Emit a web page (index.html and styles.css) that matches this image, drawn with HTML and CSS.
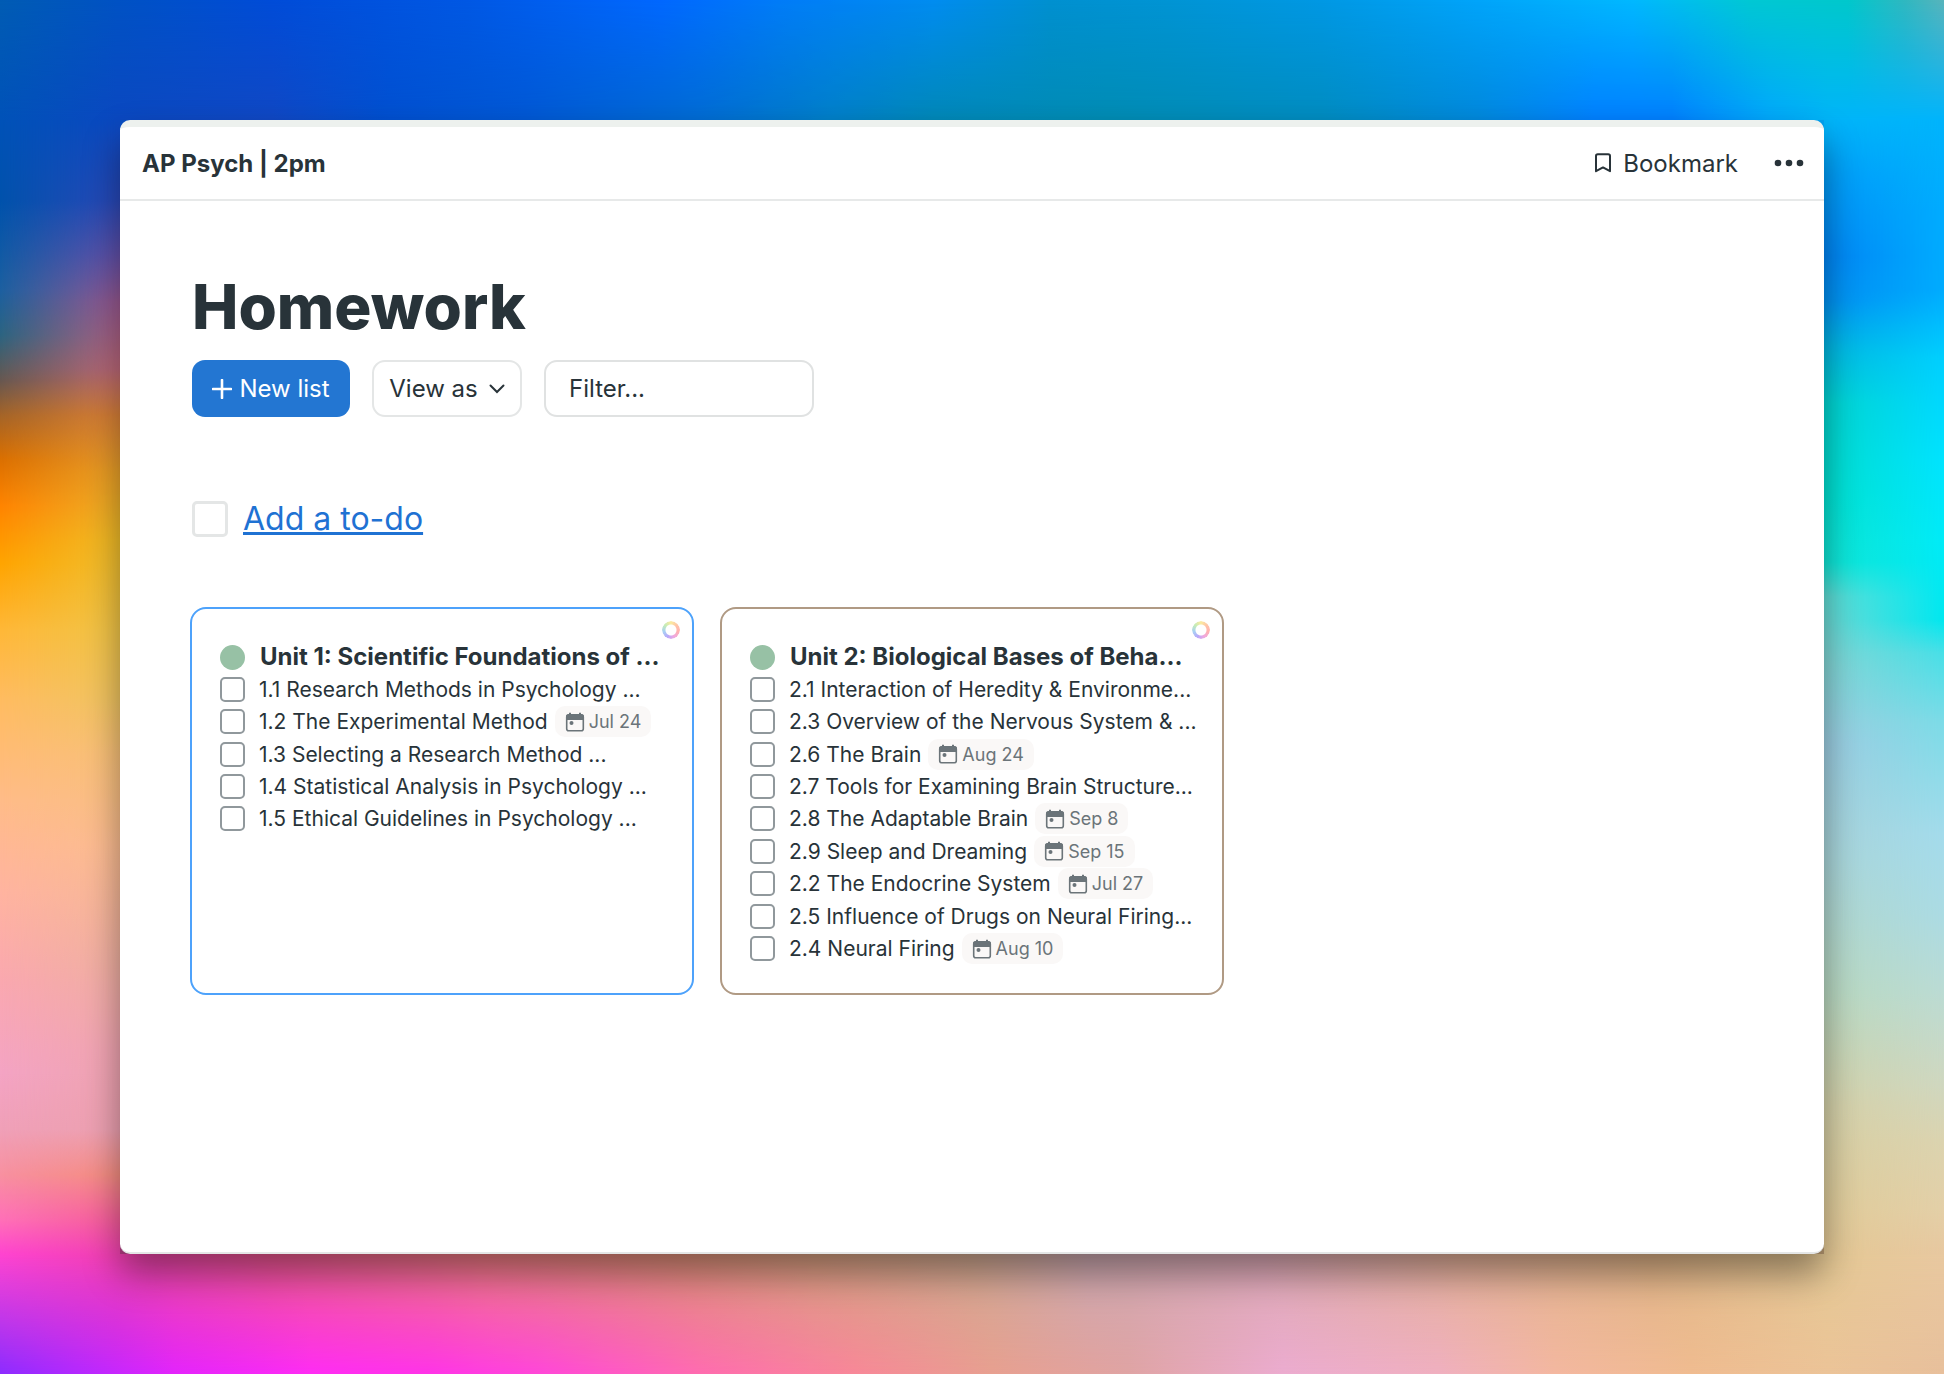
FILE: index.html
```html
<!DOCTYPE html>
<html lang="en">

<head>
    <meta charset="UTF-8">
    <meta name="viewport" content="width=device-width, initial-scale=1.0">
    <title>Homework</title>

    <link rel="stylesheet" href="styles.css">
</head>

<body>
    <!-- shared icons -->
    <svg class="sprite" aria-hidden="true">
        <symbol id="calendar" viewBox="0 0 20 20">
            <path d="M1 4.500Q1 2 3.500 2H16.500Q19 2 19 4.500V8H1V4.500Z" fill="currentColor" />
            <path d="M5 0.800V3M15 0.800V3" stroke="currentColor" stroke-width="2" />
            <rect x="1.700" y="3" width="16.600" height="15.800" rx="2" fill="none" stroke="currentColor" stroke-width="1.600" />
            <circle cx="6.500" cy="11" r="2" fill="currentColor" />
        </symbol>
    </svg>

    <div class="desktop">
        <div class="band top"></div>
        <div class="band left"></div>
        <main class="window">
            <header class="bar">
                <a class="project" href="#">AP Psych | 2pm</a>
                <div class="actions">
                    <button class="bookmark" type="button">
                        <svg width="18" height="20" viewBox="0 0 18 20" aria-hidden="true">
                            <path d="M2 18.200V3Q2 1.200 3.800 1.200H14.200Q16 1.200 16 3V18.200L9 14.400Z" fill="none" stroke="currentColor" stroke-width="2" stroke-linejoin="round" />
                        </svg>
                        Bookmark
                    </button>
                    <button class="more" type="button" aria-label="More options">
                        <svg width="30" height="8" viewBox="0 0 30 8" aria-hidden="true">
                            <circle cx="4" cy="4" r="3.300" fill="currentColor" />
                            <circle cx="15" cy="4" r="3.300" fill="currentColor" />
                            <circle cx="26" cy="4" r="3.300" fill="currentColor" />
                        </svg>
                    </button>
                </div>
            </header>

            <div class="content">
                <h1>Homework</h1>

                <div class="tools">
                    <button class="btn primary" type="button">
                        <svg width="20" height="20" viewBox="0 0 20 20" aria-hidden="true">
                            <path d="M10 1V19M1 10H19" fill="none" stroke="currentColor" stroke-width="2.600" stroke-linecap="round" />
                        </svg>
                        New list
                    </button>
                    <button class="btn view" type="button">
                        View as
                        <svg width="16" height="10" viewBox="0 0 16 10" aria-hidden="true">
                            <path d="M1.500 1.500L8 8L14.500 1.500" fill="none" stroke="currentColor" stroke-width="2" stroke-linecap="round" />
                        </svg>
                    </button>
                    <input class="filter" type="text" placeholder="Filter..." aria-label="Filter">
                </div>

                <div class="add">
                    <input type="checkbox" aria-label="New to-do">
                    <a href="#">Add a to-do</a>
                </div>

                <div class="cards">
                    <section class="card blue">
                        <button class="color" type="button" aria-label="Change color"></button>
                        <h2><i class="dot"></i><a href="#">Unit 1: Scientific Foundations of ...</a></h2>
                        <ul>
                            <li><label><input type="checkbox">1.1 Research Methods in Psychology ...</label></li>
                            <li><label><input type="checkbox">1.2 The Experimental Method</label><span class="date"><svg><use href="#calendar" /></svg>Jul 24</span></li>
                            <li><label><input type="checkbox">1.3 Selecting a Research Method ...</label></li>
                            <li><label><input type="checkbox">1.4 Statistical Analysis in Psychology ...</label></li>
                            <li><label><input type="checkbox">1.5 Ethical Guidelines in Psychology ...</label></li>
                        </ul>
                    </section>

                    <section class="card brown">
                        <button class="color" type="button" aria-label="Change color"></button>
                        <h2><i class="dot"></i><a href="#">Unit 2: Biological Bases of Beha...</a></h2>
                        <ul>
                            <li><label><input type="checkbox">2.1 Interaction of Heredity &amp; Environme...</label></li>
                            <li><label><input type="checkbox">2.3 Overview of the Nervous System &amp; ...</label></li>
                            <li><label><input type="checkbox">2.6 The Brain</label><span class="date"><svg><use href="#calendar" /></svg>Aug 24</span></li>
                            <li><label><input type="checkbox">2.7 Tools for Examining Brain Structure...</label></li>
                            <li><label><input type="checkbox">2.8 The Adaptable Brain</label><span class="date"><svg><use href="#calendar" /></svg>Sep 8</span></li>
                            <li><label><input type="checkbox">2.9 Sleep and Dreaming</label><span class="date"><svg><use href="#calendar" /></svg>Sep 15</span></li>
                            <li><label><input type="checkbox">2.2 The Endocrine System</label><span class="date"><svg><use href="#calendar" /></svg>Jul 27</span></li>
                            <li><label><input type="checkbox">2.5 Influence of Drugs on Neural Firing...</label></li>
                            <li><label><input type="checkbox">2.4 Neural Firing</label><span class="date"><svg><use href="#calendar" /></svg>Aug 10</span></li>
                        </ul>
                    </section>
                </div>
            </div>
        </main>
        <div class="band right"></div>
        <div class="band bottom"></div>
    </div>
</body>

</html>
```
FILE: styles.css
```css
* {
    margin: 0;
    padding: 0;
    box-sizing: border-box;
}

body {
    font-family: Inter, "Liberation Sans", sans-serif;
    font-size: 21px;
    color: #283339;
}

button,
input {
    font: inherit;
    color: inherit;
    background: none;
    border: none;
}

button {
    cursor: pointer;
}

a {
    color: inherit;
    text-decoration: none;
}

.sprite {
    position: absolute;
    width: 0;
    height: 0;
}

/* wallpaper: four bands around the window, each one blends
   its outer gradient into its inner gradient */
.desktop {
    min-height: 100vh;
    display: grid;
    grid-template-columns: 120px 1fr 120px;
    grid-template-rows: 120px 1fr 120px;
    grid-template-areas:
        "top top top"
        "left window right"
        "bottom bottom bottom";
    /* shows behind the rounded corners of the window */
    background:
        linear-gradient(to right, #0a48c0, #00a8f4) top / 100% 50% no-repeat,
        linear-gradient(to right, #b83888, #b8a070) bottom / 100% 50% no-repeat;
}

.band {
    display: grid;
}

.band::after {
    content: "";
}

.top {
    grid-area: top;
    background: linear-gradient(to right, #005cb4 0%, #0052c4 6%, #004cd8 14%, #0058e4 24%, #0068ff 34%, #007cf8 40%, #008cf0 48%, #0090d0 54%, #0094d4 60%, #0098e4 68%, #00a4fa 76%, #00b8ff 84%, #00c8d4 90%, #00c8cc 95%, #30b8c0 98%, #58b4bc 100%);
}

.top::after {
    background: linear-gradient(to right, #0052b8 0%, #0a48c0 6%, #1048c4 14%, #0050d0 20%, #0058d4 27%, #006cd4 36%, #0080c8 43%, #0088b8 48%, #008cb4 57%, #008cc0 68%, #0088dc 76%, #0080ff 82%, #0080ff 86%, #00a8fc 91%, #00b4f8 94%, #00b4fc 100%);
    mask-image: linear-gradient(to bottom, transparent, #000);
}

.left {
    grid-area: left;
    background: linear-gradient(to bottom, #0052b8 0%, #0052ac 7%, #1c60a0 15%, #2c6480 19%, #685850 23%, #a46428 26%, #dc7000 30%, #ff8400 34%, #ffa400 39%, #ffb838 45%, #ffbc60 51%, #ffbc88 60%, #ffb4a0 68%, #faa8b0 76%, #f4a4c4 84%, #f0a0b8 89%, #f890a0 93%, #ff70b8 97%, #ff44d0 100%);
}

.left::after {
    background: linear-gradient(to bottom, #0a48c0 0%, #2848b8 7%, #6450a8 12%, #985890 16%, #bc6878 22%, #d88038 26%, #e8a028 31%, #f0bc28 37%, #f0c448 45%, #f0c460 51%, #f8c078 56%, #fcbc90 64%, #f0b0a0 74%, #f0a4b0 82%, #eca0b0 89%, #f48c80 93%, #f45c98 97%, #f040b0 100%);
    mask-image: linear-gradient(to right, transparent, #000);
}

.right {
    grid-area: right;
    background: linear-gradient(to bottom, #00b4fc 0%, #00acff 8%, #00acff 15%, #00d0ff 21%, #00e4ff 30%, #00ecf8 37%, #00e8f0 44%, #48e0e8 47%, #7cdce8 53%, #a4dcec 63%, #acdce4 70%, #bcdcd4 77%, #d0d8c0 85%, #dcd4b0 90%, #e4d0a8 96%, #e8c8a0 100%);
}

.right::after {
    background: linear-gradient(to bottom, #00b4f8 0%, #009cf8 5%, #0084f4 12%, #0090f0 16%, #00b4e0 20%, #00d4d0 25%, #00e0d0 33%, #10e4d4 39%, #60dcd4 42%, #84d4d4 48%, #9ccce0 55%, #a8d4d8 65%, #b8d8c0 77%, #d4d0a8 87%, #dccc9c 94%, #e4c894 100%);
    mask-image: linear-gradient(to left, transparent, #000);
}

.bottom {
    grid-area: bottom;
    background: linear-gradient(to right, #8c2cff 0%, #b428ff 4%, #e424fc 9%, #ff2cf4 16%, #ff34e8 22%, #ff48d8 28%, #ff6cb0 36%, #f88898 44%, #e8a090 51%, #e0a4a4 58%, #ecacd0 66%, #f0b0c0 74%, #f4b8a0 80%, #f0bc90 87%, #ecc498 94%, #e8c09c 100%);
}

.bottom::after {
    background: linear-gradient(to right, #ff44d0 0%, #f040b0 6%, #f05890 14%, #f07c80 25%, #e09078 35%, #d8a080 42%, #d0a890 50%, #cca8b0 56%, #dca8b4 65%, #e4b098 75%, #e0b488 85%, #e4c894 94%, #e8c8a0 100%);
    mask-image: linear-gradient(to top, transparent, #000);
}

/* window */
.window {
    grid-area: window;
    z-index: 1;
    background: #fff;
    border-top: 7px solid #edf1ee;
    border-bottom: 2px solid #e4e6e6;
    border-radius: 10px;
    box-shadow: 0 20px 36px rgba(0, 0, 0, .4);
}

.bar {
    height: 74px;
    padding: 0 20px 0 22px;
    border-bottom: 2px solid #e7e9e9;
    display: flex;
    align-items: center;
    justify-content: space-between;
}

.project {
    font-size: 24px;
    font-weight: 700;
}

.actions {
    display: flex;
    align-items: center;
    gap: 36px;
}

.bookmark {
    font-size: 24px;
    display: flex;
    align-items: center;
    gap: 11px;
}

.more {
    display: flex;
}

.content {
    padding: 68px 72px;
}

h1 {
    font-size: 62px;
    font-weight: 800;
    line-height: 76px;
}

.tools {
    margin-top: 15px;
    display: flex;
    gap: 22px;
}

.btn {
    height: 57px;
    font-size: 24px;
    border-radius: 13px;
    display: flex;
    align-items: center;
    justify-content: center;
    gap: 7px;
}

.primary {
    width: 158px;
    background: #2376d2;
    color: #fff;
}

.view {
    width: 150px;
    gap: 11px;
    border: 2px solid #e4e6e6;
}

.filter {
    width: 270px;
    padding: 0 23px;
    font-size: 24px;
    border: 2px solid #e0e2e2;
    border-radius: 13px;
}

.filter::placeholder {
    color: #283339;
}

.add {
    margin-top: 80px;
    display: flex;
    align-items: center;
    gap: 15px;
    font-size: 32px;
    line-height: 44px;
}

.add a {
    color: #1f72d3;
    text-decoration: underline;
    text-decoration-thickness: 3px;
}

.add input {
    width: 36px;
    height: 36px;
    border: 3px solid #e4e6e6;
}

input[type="checkbox"] {
    appearance: none;
    border-radius: 5px;
}

/* cards */
.cards {
    margin: 66px -2px 0;
    display: grid;
    grid-template-columns: repeat(3, minmax(0, 1fr));
    gap: 26px;
}

.card {
    position: relative;
    padding: 32px 28px 28px;
    border: 2px solid;
    border-radius: 16px;
    white-space: nowrap;
}

.blue {
    border-color: #4da2fb;
}

.brown {
    border-color: #b09a84;
}

/* rainbow ring in the corner */
.color {
    position: absolute;
    top: 12px;
    right: 12px;
    width: 18px;
    height: 18px;
    border-radius: 50%;
    background: conic-gradient(#fbeaa0, #ffc4a8, #ffb0b0, #f0a8e0, #b8a8fa, #a8d0f4, #c4ecb8, #fbeaa0);
    mask-image: radial-gradient(circle, transparent 5px, #000 6px);
}

.card h2 {
    font-size: 24px;
    font-weight: 700;
    line-height: 32px;
    display: flex;
    align-items: center;
    gap: 15px;
}

.dot {
    width: 25px;
    height: 25px;
    border-radius: 50%;
    background: #97c1a5;
}

.card ul {
    height: 292px;
    list-style: none;
    display: grid;
    grid-template-rows: repeat(9, 1fr);
}

.card li,
.card label {
    display: flex;
    align-items: center;
}

.card label {
    gap: 14px;
}

.card label input {
    width: 25px;
    height: 25px;
    border: 2px solid #90989c;
}

.date {
    height: 31px;
    margin-left: 7px;
    padding: 0 10px;
    display: flex;
    align-items: center;
    gap: 4px;
    font-size: 18px;
    color: #6b7479;
    background: #faf8f7;
    border-radius: 10px;
}

.date svg {
    width: 20px;
    height: 20px;
}
```
